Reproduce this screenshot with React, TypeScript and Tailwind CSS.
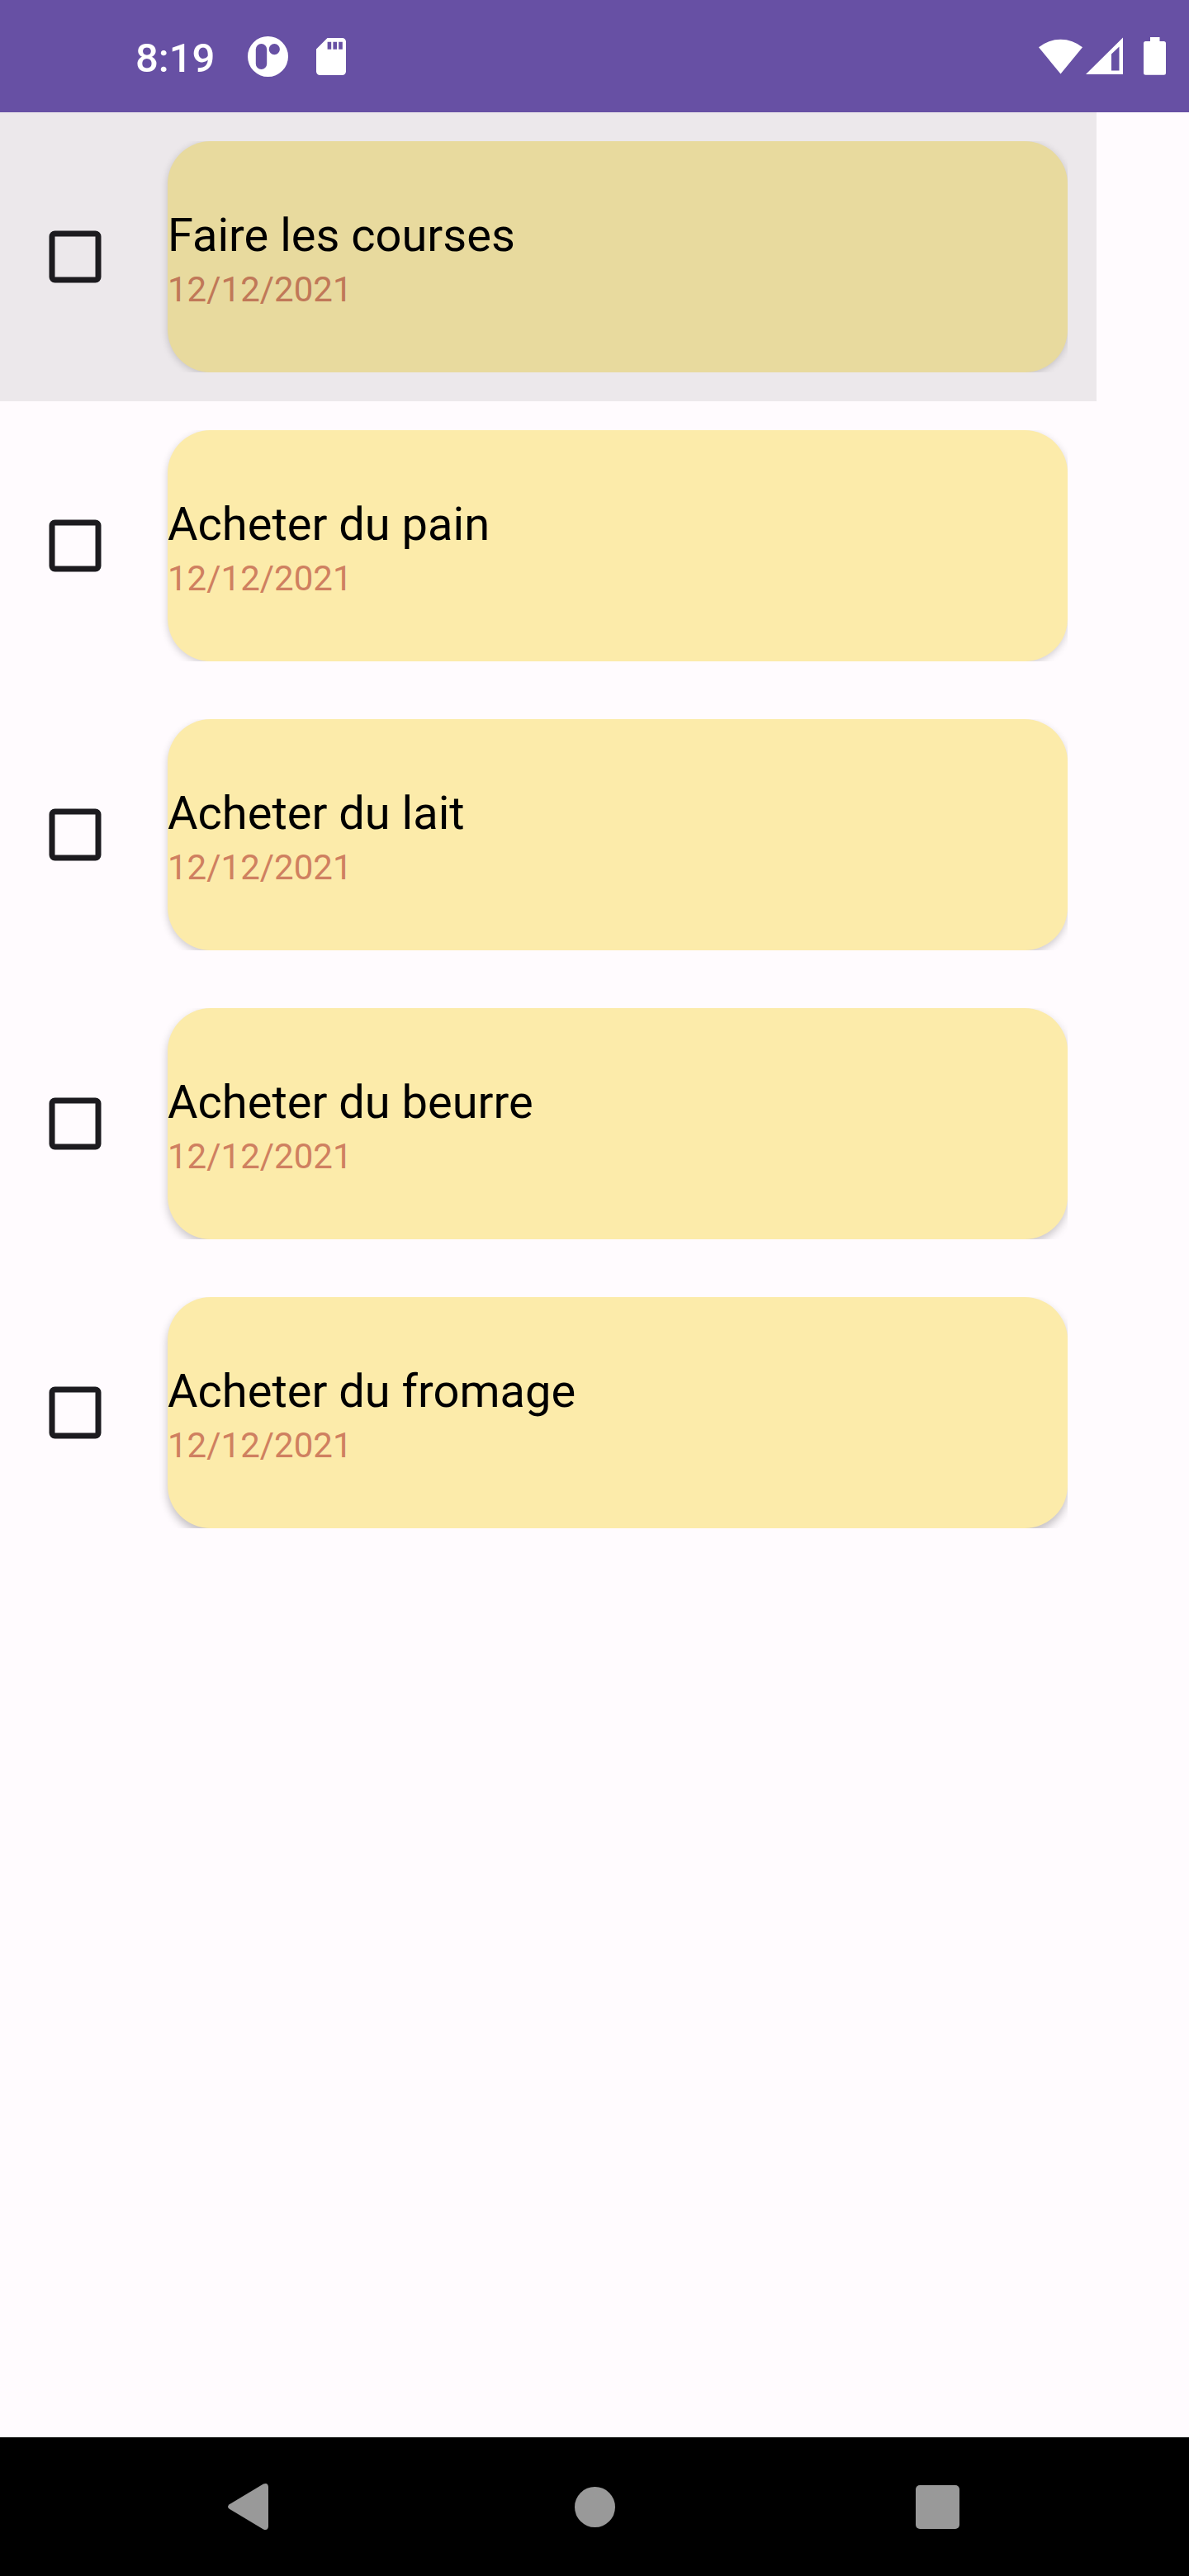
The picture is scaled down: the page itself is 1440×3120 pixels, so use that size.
const tasks = [
  { title: "Faire les courses", date: "12/12/2021", pressed: true },
  { title: "Acheter du pain", date: "12/12/2021" },
  { title: "Acheter du lait", date: "12/12/2021" },
  { title: "Acheter du beurre", date: "12/12/2021" },
  { title: "Acheter du fromage", date: "12/12/2021" },
];

const shadows = [
  "shadow-[0_2px_10px_rgba(0,0,0,0.18)]",
  "shadow-[0_3px_10px_rgba(0,0,0,0.18)]",
  "shadow-[0_4px_10px_rgba(0,0,0,0.19)]",
  "shadow-[0_5px_11px_rgba(0,0,0,0.21)]",
  "shadow-[0_6px_11px_rgba(0,0,0,0.24)]",
];

function StatusBar() {
  return (
    <header className="flex h-[136px] shrink-0 items-start justify-between bg-[#6750a4] text-white">
      <div className="flex items-start pl-[164px]">
        <span className="mt-[42px] w-[136px] text-[49px] leading-[58px] font-medium">8:19</span>
        <svg className="mt-[44px] h-[49px] w-[49px]" viewBox="0 0 49 49" fill="currentColor">
          <path
            fillRule="evenodd"
            d="M24.5 0a24.5 24.5 0 1 1 0 49a24.5 24.5 0 1 1 0-49zM16.5 9a6.7 6.7 0 0 0-6.7 6.7v17.600a6.7 6.7 0 0 0 13.4 0v-17.600a6.7 6.7 0 0 0-6.7-6.7zM32.3 9a6.6 6.6 0 1 0 0 13.2a6.6 6.6 0 1 0 0-13.2z"
          />
        </svg>
        <svg className="mt-[46px] ml-[34px] h-[45px] w-[36px]" viewBox="0 0 36 45" fill="currentColor">
          <path
            fillRule="evenodd"
            d="M13.5 0H31.5a4.5 4.5 0 0 1 4.5 4.5V40.5a4.5 4.5 0 0 1-4.5 4.5H4.5a4.5 4.5 0 0 1-4.5-4.5V13.5zM13.6 4.7v9h4.6v-9zM20.4 4.7v9h4.6v-9zM27.2 4.7v9h4.6v-9z"
          />
        </svg>
      </div>
      <div className="flex items-start pt-[45px] pr-[28px]">
        <svg className="h-[45px] w-[53px]" viewBox="0 0 53 45" fill="currentColor">
          <path d="M0 12.3A41.5 41.5 0 0 1 53 12.3L26.5 44.5z" />
        </svg>
        <svg className="ml-[4px] h-[45px] w-[45px]" viewBox="0 0 45 45" fill="currentColor">
          <path fillRule="evenodd" d="M45 .5V45H0zM40.5 11.5L31 20.5V40.5H40.5z" />
        </svg>
        <svg className="ml-[25px] h-[46px] w-[27px]" viewBox="0 0 27 46" fill="currentColor">
          <path d="M8 0H19.5V5H24.5a2.5 2.5 0 0 1 2.5 2.5V43.2a2.5 2.5 0 0 1-2.5 2.5H2.5a2.5 2.5 0 0 1-2.5-2.5V7.5A2.5 2.5 0 0 1 2.5 5H8z" />
        </svg>
      </div>
    </header>
  );
}

function TaskRow({ task, shadow }: { task: (typeof tasks)[number]; shadow: string }) {
  return (
    <li className={`flex h-[350px] w-[1328px] items-center ${task.pressed ? "bg-[#ece8eb]" : ""}`}>
      <button className="flex w-[182px] shrink-0 justify-center" role="checkbox" aria-checked="false" aria-label={task.title}>
        <svg className="h-16 w-16" viewBox="0 0 64 64" fill="none" stroke="#1c1b1f" strokeWidth="7">
          <rect x="4" y="4" width="56" height="56" rx="3.5" />
        </svg>
      </button>
      <div className="h-[280px] w-[1111px] overflow-hidden pl-[21px]">
        <div
          className={`flex h-full w-[1090px] flex-col justify-center rounded-[52px] pt-[13px] ${shadow} ${
            task.pressed ? "bg-[#e8da9e]" : "bg-[#fcebaa]"
          }`}
        >
          <p className="text-[56px] leading-[66px] text-black">{task.title}</p>
          <p className={`text-[42px] leading-[65px] ${task.pressed ? "text-[#c07858]" : "text-[#cf8060]"}`}>{task.date}</p>
        </div>
      </div>
    </li>
  );
}

function NavigationBar() {
  return (
    <nav className="flex h-[168px] shrink-0 items-center justify-center bg-black text-[#999999]">
      <button className="flex w-[415px] justify-center" aria-label="Retour">
        <svg className="h-[58px] w-[58px]" viewBox="0 0 58 58" fill="currentColor">
          <path d="M43 1.6L1.8 26.200Q-1.800 29 1.800 31.800L43 56.400Q48.500 58.500 49 53V5Q48.500-.5 43 1.600z" />
        </svg>
      </button>
      <button className="flex w-[415px] justify-center" aria-label="Accueil">
        <span className="h-[49px] w-[49px] rounded-full bg-[#999999]" />
      </button>
      <button className="flex w-[415px] justify-center" aria-label="Aperçu">
        <span className="h-[53px] w-[53px] rounded-[5px] bg-[#999999]" />
      </button>
    </nav>
  );
}

export default function App() {
  return (
    <div className="flex h-[3120px] w-[1440px] flex-col overflow-hidden bg-[#fffbfe] font-[Roboto,sans-serif]">
      <StatusBar />
      <main className="grow">
        <ul>
          {tasks.map((task, i) => (
            <TaskRow key={task.title} task={task} shadow={shadows[i]} />
          ))}
        </ul>
      </main>
      <NavigationBar />
    </div>
  );
}
